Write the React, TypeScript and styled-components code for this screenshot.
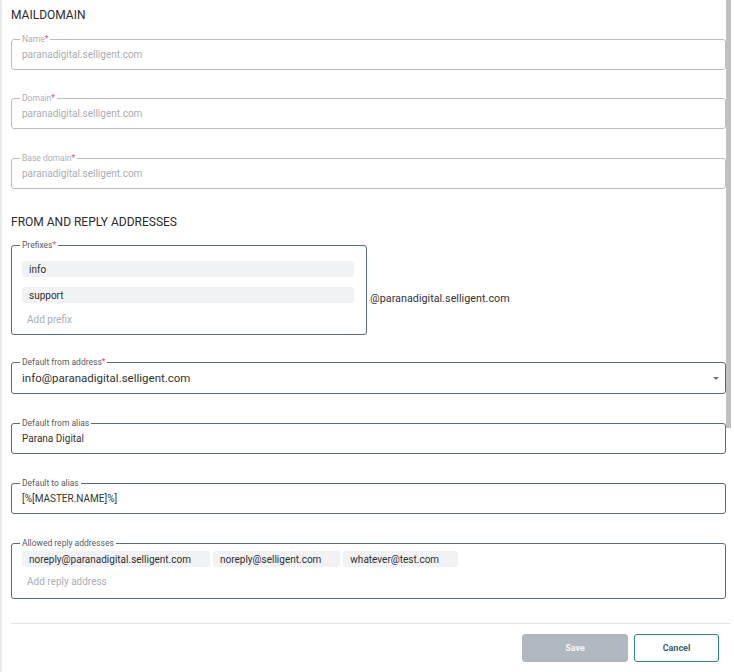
import React from "react";
import styled, { createGlobalStyle } from "styled-components";

const GlobalStyle = createGlobalStyle`
  html, body {
    margin: 0;
    padding: 0;
    background: #ffffff;
  }
  body {
    font-family: Roboto, "Liberation Sans", Arial, sans-serif;
    color: #2b2b2b;
  }
  * {
    box-sizing: border-box;
  }
`;

const Page = styled.div`
  position: relative;
  min-height: 672px;
  border-left: 2px solid #e8eaee;
  padding: 0 8px 0 9px;
  overflow: hidden;
`;

const ScrollThumb = styled.div`
  position: absolute;
  top: 0;
  right: 3px;
  width: 5px;
  height: 428px;
  background: #c1c1c1;
`;

const SectionTitle = styled.h2<{ $top: number }>`
  margin: ${(p) => p.$top}px 0 0;
  font-size: 12px;
  line-height: 16px;
  font-weight: 400;
  color: #2b2b2b;
  text-transform: uppercase;
`;

const Field = styled.fieldset<{ $disabled?: boolean; $top: number; $width?: number }>`
  margin: ${(p) => p.$top}px 0 0;
  padding: 0 10px ${(p) => (p.$disabled ? 5 : 4)}px 10px;
  min-width: 0;
  width: ${(p) => (p.$width ? `${p.$width}px` : "100%")};
  border: 1px solid ${(p) => (p.$disabled ? "#b9bec6" : "#5d6878")};
  border-radius: 3px;
  flex-shrink: 0;
`;

const Legend = styled.legend<{ $disabled?: boolean }>`
  margin-left: -2px;
  padding: 0 2px;
  font-size: 8.5px;
  line-height: 10px;
  color: ${(p) => (p.$disabled ? "#abb0b6" : "#555b63")};
`;

const Required = styled.span`
  color: #e2535f;
`;

const Value = styled.div<{ $size?: number; $muted?: boolean; $height?: number }>`
  display: flex;
  align-items: center;
  justify-content: space-between;
  height: ${(p) => p.$height ?? 20}px;
  font-size: ${(p) => p.$size ?? 10}px;
  color: ${(p) => (p.$muted ? "#a9aeb4" : "#333333")};
  white-space: nowrap;
`;

const Caret = styled.span`
  width: 0;
  height: 0;
  margin-right: -4px;
  border-left: 3px solid transparent;
  border-right: 3px solid transparent;
  border-top: 3px solid #6e7580;
`;

const PrefixRow = styled.div`
  display: flex;
  align-items: center;
  gap: 3px;
  margin-top: 10px;
`;

const PrefixList = styled.div`
  display: flex;
  flex-direction: column;
  gap: 10px;
  padding: 11px 2px 1px 0;
`;

const Chip = styled.div<{ $block?: boolean }>`
  display: flex;
  align-items: center;
  height: 16px;
  padding: 0 ${(p) => (p.$block ? 7 : 19)}px 0 7px;
  border-radius: 3px;
  background: #f1f2f4;
  font-size: 10px;
  font-weight: 400;
  color: #2f2f2f;
  white-space: nowrap;
`;

const Placeholder = styled.div<{ $top: number }>`
  margin-top: ${(p) => p.$top}px;
  padding-left: 5px;
  line-height: 16px;
  font-size: 10px;
  color: #a9aeb4;
`;

const Suffix = styled.span`
  padding-top: 22px;
  font-size: 10.8px;
  color: #333333;
`;

const ChipRow = styled.div`
  display: flex;
  gap: 3px;
  padding-top: 3px;
`;

const Divider = styled.hr`
  margin: 24px -4px 0 0;
  border: 0;
  border-top: 1px solid #e3e4e6;
`;

const Footer = styled.div`
  display: flex;
  justify-content: flex-end;
  gap: 6px;
  margin-top: 10px;
  padding-right: 7px;
`;

const Button = styled.button<{ $primary?: boolean; $width: number }>`
  width: ${(p) => p.$width}px;
  height: 28px;
  border-radius: 3px;
  font-family: inherit;
  font-size: 9px;
  font-weight: 700;
  cursor: pointer;
  border: 1px solid ${(p) => (p.$primary ? "#b1b8c0" : "#2e8a7a")};
  background: ${(p) => (p.$primary ? "#b1b8c0" : "#ffffff")};
  color: ${(p) => (p.$primary ? "#f4f6f8" : "#3a6470")};
`;

const domain = "paranadigital.selligent.com";

const disabledFields = [
  { label: "Name", top: 11 },
  { label: "Domain", top: 23 },
  { label: "Base domain", top: 24 },
];

const replyAddresses = [
  "noreply@paranadigital.selligent.com",
  "noreply@selligent.com",
  "whatever@test.com",
];

export default function App() {
  return (
    <>
      <GlobalStyle />
      <Page>
        <ScrollThumb />
        <SectionTitle $top={7}>Maildomain</SectionTitle>

        {disabledFields.map((f) => (
          <Field key={f.label} $disabled $top={f.top}>
            <Legend $disabled>
              {f.label}
              <Required>*</Required>
            </Legend>
            <Value $muted>{domain}</Value>
          </Field>
        ))}

        <SectionTitle $top={25}>From and reply addresses</SectionTitle>

        <PrefixRow>
          <Field $top={0} $width={356} style={{ paddingBottom: 6 }}>
            <Legend>
              Prefixes<Required>*</Required>
            </Legend>
            <PrefixList>
              <Chip $block>info</Chip>
              <Chip $block>support</Chip>
            </PrefixList>
            <Placeholder $top={8}>Add prefix</Placeholder>
          </Field>
          <Suffix>@{domain}</Suffix>
        </PrefixRow>

        <Field $top={22}>
          <Legend>
            Default from address<Required>*</Required>
          </Legend>
          <Value $size={11.5} $height={22}>
            info@{domain}
            <Caret />
          </Value>
        </Field>

        <Field $top={24} style={{ paddingBottom: 5 }}>
          <Legend>Default from alias</Legend>
          <Value>Parana Digital</Value>
        </Field>

        <Field $top={24} style={{ paddingBottom: 5 }}>
          <Legend>Default to alias</Legend>
          <Value>[%[MASTER.NAME]%]</Value>
        </Field>

        <Field $top={24} style={{ paddingBottom: 8 }}>
          <Legend>Allowed reply addresses</Legend>
          <ChipRow>
            {replyAddresses.map((a) => (
              <Chip key={a}>{a}</Chip>
            ))}
          </ChipRow>
          <Placeholder $top={7}>Add reply address</Placeholder>
        </Field>

        <Divider />

        <Footer>
          <Button $primary $width={106}>
            Save
          </Button>
          <Button $width={85}>Cancel</Button>
        </Footer>
      </Page>
    </>
  );
}
